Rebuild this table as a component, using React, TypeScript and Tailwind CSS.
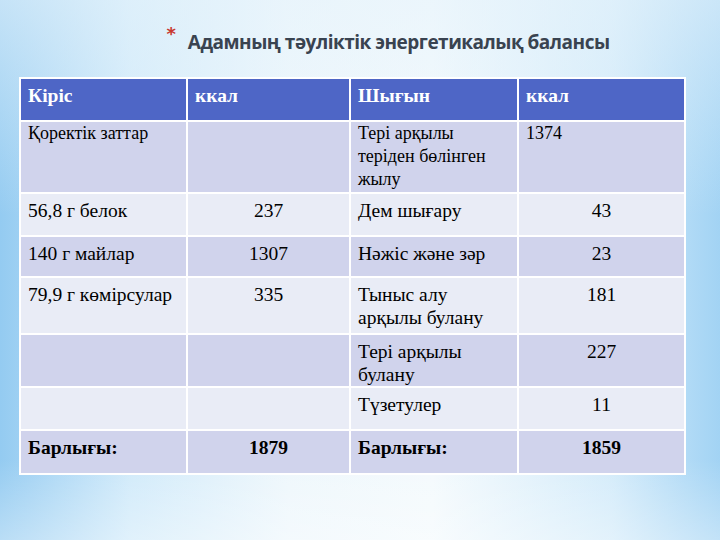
const rows: { cells: [string, string, string, string]; tall?: string; bold?: boolean; small?: boolean }[] = [
  { cells: ["Қоректік заттар", "", "Тері арқылы теріден бөлінген жылу", "1374"], tall: "h-[72px]", small: true },
  { cells: ["56,8 г белок", "237", "Дем шығару", "43"], tall: "h-[43px]" },
  { cells: ["140 г майлар", "1307", "Нәжіс және зәр", "23"], tall: "h-[41px]" },
  { cells: ["79,9 г көмірсулар", "335", "Тыныс алу арқылы булану", "181"], tall: "h-[57px]" },
  { cells: ["", "", "Тері арқылы булану", "227"], tall: "h-[53px]" },
  { cells: ["", "", "Түзетулер", "11"], tall: "h-[43px]" },
  { cells: ["Барлығы:", "1879", "Барлығы:", "1859"], tall: "h-[44px]", bold: true },
];

export default function App() {
  return (
    <div className="relative h-[540px] w-[720px] overflow-hidden bg-[linear-gradient(90deg,#94cbf1_0%,#d0eafa_18%,#eef7fc_40%,#f4fafd_60%,#d3ebfa_85%,#a2d3f4_100%)]">
      <div className="pointer-events-none absolute inset-0 bg-[linear-gradient(180deg,rgba(230,243,251,0.6)_0%,rgba(255,255,255,0)_40%,rgba(255,255,255,0)_85%,rgba(255,255,255,0.35)_100%)]" />
      <div className="relative flex flex-col">
        <div className="flex h-[77px] items-start justify-center pl-[56px] pt-[28px]">
          <span className="mr-[12px] mt-[-3px] text-[18px] font-bold leading-none text-[#c8382e] [font-family:'DejaVu_Sans',sans-serif]">*</span>
          <h1 className="text-[19px] font-bold leading-[28px] tracking-[-0.5px] text-[#394350] [font-family:'Open_Sans',sans-serif]">
            Адамның тәуліктік энергетикалық балансы
          </h1>
        </div>
        <div className="ml-[19px] w-[665px]">
          <table className="w-full table-fixed border-collapse text-black [font-family:'Liberation_Serif','Times_New_Roman',serif]">
            <colgroup>
              <col className="w-[167px]" />
              <col className="w-[163px]" />
              <col className="w-[168px]" />
              <col className="w-[167px]" />
            </colgroup>
            <thead>
              <tr className="h-[43px] bg-[#4e66c6] text-white">
                {["Кіріс", "ккал", "Шығын", "ккал"].map((h, i) => (
                  <th key={i} className="border-2 border-white px-[7px] pb-[8px] text-left align-middle text-[19.5px] font-bold [font-family:'Liberation_Serif',serif]">
                    {h}
                  </th>
                ))}
              </tr>
            </thead>
            <tbody>
              {rows.map((r, ri) => (
                <tr key={ri} className={`${r.tall} ${ri % 2 === 0 ? "bg-[#d0d3ec]" : "bg-[#e9ecf6]"}`}>
                  {r.cells.map((c, ci) => {
                    const numeric = ci % 2 === 1 && !r.small;
                    return (
                      <td
                        key={ci}
                        className={`border-2 border-white px-[7px] align-top [font-family:'Liberation_Serif',serif] ${
                          r.small ? "pt-0 text-[18px] leading-[23px]" : "pt-[5px] text-[19.5px] leading-[23px]"
                        } ${numeric ? "text-center" : "text-left"} ${r.bold ? "font-bold" : ""}`}
                      >
                        {c}
                      </td>
                    );
                  })}
                </tr>
              ))}
            </tbody>
          </table>
        </div>
      </div>
    </div>
  );
}
